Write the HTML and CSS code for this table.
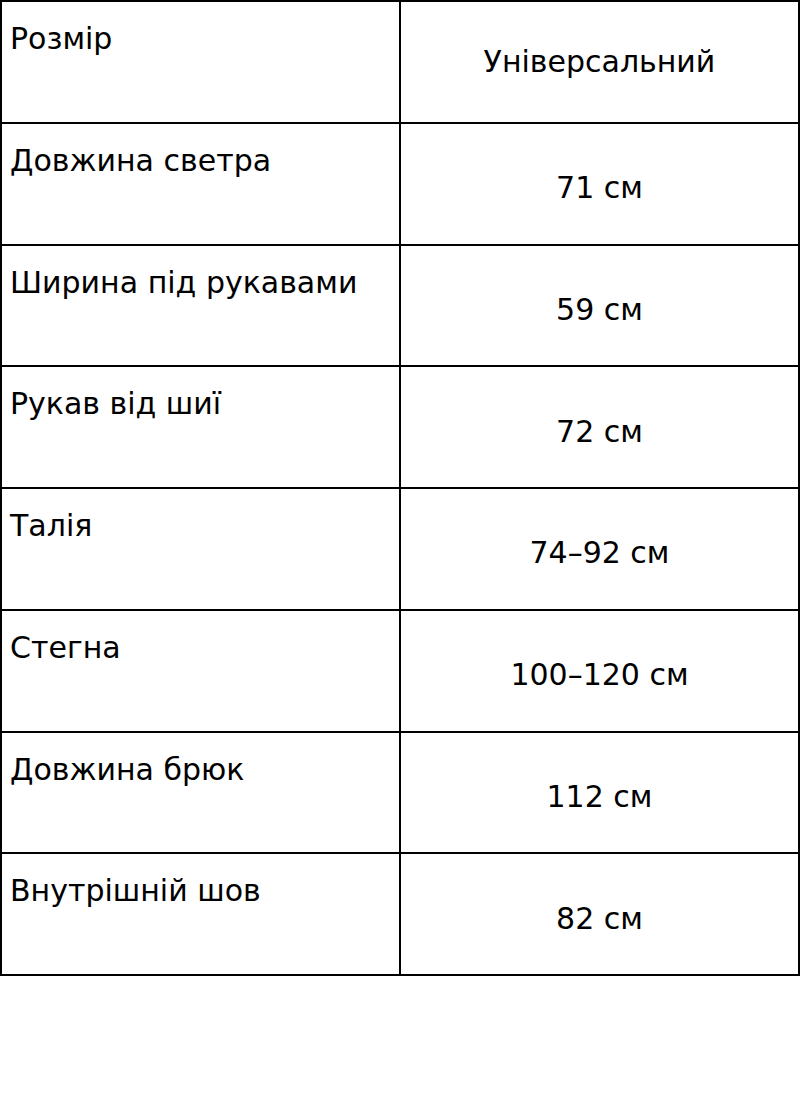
FILE: index.html
```html
<!DOCTYPE html>
<html lang="uk">
<head>
<meta charset="utf-8">
<title>Розміри</title>
<link rel="stylesheet" href="styles.css">
</head>
<body>
<table class="size-table">
  <tr class="head"><td class="label">Розмір</td><td class="value">Універсальний</td></tr>
  <tr><td class="label">Довжина светра</td><td class="value">71 см</td></tr>
  <tr><td class="label">Ширина під рукавами</td><td class="value">59 см</td></tr>
  <tr><td class="label">Рукав від шиї</td><td class="value">72 см</td></tr>
  <tr><td class="label">Талія</td><td class="value">74–92 см</td></tr>
  <tr><td class="label">Стегна</td><td class="value">100–120 см</td></tr>
  <tr><td class="label">Довжина брюк</td><td class="value">112 см</td></tr>
  <tr><td class="label">Внутрішній шов</td><td class="value">82 см</td></tr>
</table>
</body>
</html>
```
FILE: styles.css
```css
html, body {
  margin: 0;
  padding: 0;
  background: #fff;
}
body {
  font-family: "DejaVu Sans", sans-serif;
  font-size: 30px;
  color: #000;
}
.size-table {
  width: 800px;
  border-collapse: collapse;
  table-layout: fixed;
}
.size-table td {
  border: 2px solid #000;
  height: 121.75px;
  box-sizing: border-box;
  width: 50%;
  line-height: 35px;
}
.label {
  vertical-align: top;
  padding: 19px 8px 0 8px;
  text-align: left;
}
.value {
  vertical-align: middle;
  text-align: center;
  padding: 8px 0 0 0;
}
.head .value {
  padding: 0;
}
```
